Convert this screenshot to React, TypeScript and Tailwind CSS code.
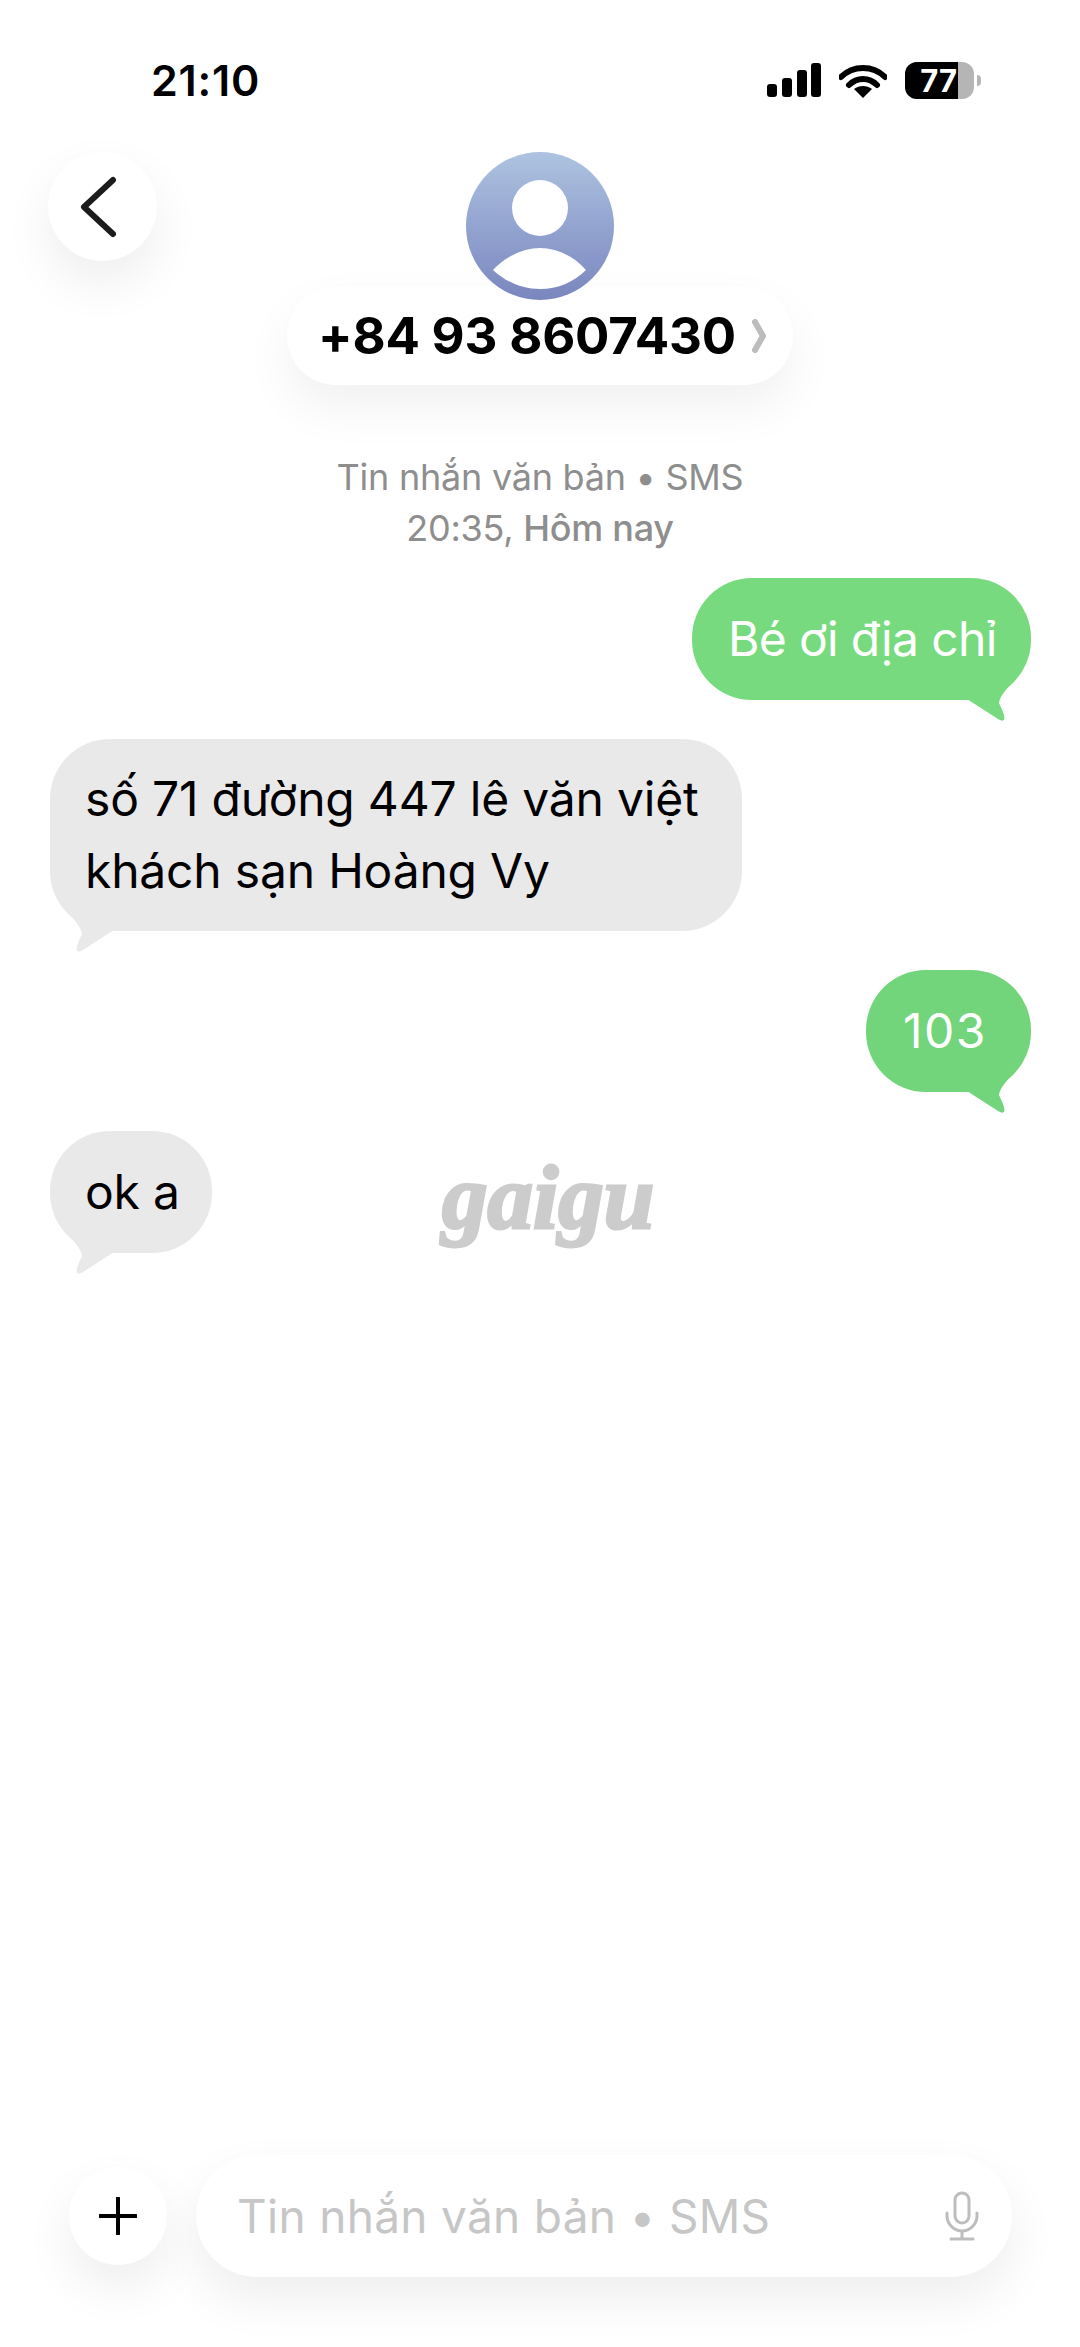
const sans = "font-['Inter','Noto_Sans',sans-serif]";

const Tail = ({ color, flip }: { color: string; flip?: boolean }) => (
  <svg
    viewBox="0 0 70 50"
    className={`absolute bottom-[-21px] w-[70px] h-[50px] ${flip ? "right-0 -scale-x-100" : "left-0"}`}
  >
    <path d="M64 28L33 48Q25 53 27 44Q29 38 32 32C31 25 24 17 17 10Z" fill={color} />
  </svg>
);

const Bubble = ({
  mine,
  tail,
  className,
  children,
}: {
  mine?: boolean;
  tail: string;
  className: string;
  children: React.ReactNode;
}) => (
  <div className={`flex ${mine ? "justify-end pr-[49px]" : "justify-start pl-[50px]"}`}>
    <div className={`relative rounded-[60px] text-[48px] leading-[72px] tracking-[-0.2px] ${className}`}>
      <Tail color={tail} flip={mine} />
      <span className="relative">{children}</span>
    </div>
  </div>
);

const StatusBar = () => (
  <div className="flex items-center justify-between h-[40px] mt-[60px] pl-[151px] pr-[99px]">
    <span className="text-[43px] font-semibold tracking-[0.8px] text-black">21:10</span>
    <div className="flex items-center">
      <svg viewBox="0 0 54 34" className="w-[54px] h-[34px]">
        <rect x="0" y="21" width="10" height="13" rx="3" />
        <rect x="15" y="15" width="10" height="19" rx="3" />
        <rect x="30" y="7" width="10" height="27" rx="3" />
        <rect x="44" y="0" width="10" height="34" rx="3" />
      </svg>
      <svg viewBox="0 0 48 35" className="w-[48px] h-[35px] ml-[18px]">
        <path d="M2 14C14 2 34 2 46 14" fill="none" stroke="#000" strokeWidth="6" strokeLinecap="round" />
        <path d="M10 22C18 14 30 14 38 22" fill="none" stroke="#000" strokeWidth="6" strokeLinecap="round" />
        <path d="M24 35L15 26C20 22 28 22 33 26Z" />
      </svg>
      <div className="flex items-center ml-[18px]">
        <div className="relative w-[69px] h-[37px] rounded-[12px] overflow-hidden bg-[#b5b5b5]">
          <div className="flex items-center justify-end w-[53px] h-full bg-black pr-[1px] text-[31px] font-bold leading-none text-white">
            77
          </div>
        </div>
        <div className="w-[4px] h-[11px] ml-[3px] rounded-r-full bg-[#b5b5b5]" />
      </div>
    </div>
  </div>
);

const Header = () => (
  <div className="grid grid-cols-[1fr_auto_1fr] mt-[52px] px-[48px]">
    <div>
      <button className="flex items-center justify-center w-[109px] h-[109px] pr-[9px] rounded-full bg-white shadow-[0_22px_50px_rgba(0,0,0,0.07)]">
        <svg viewBox="0 0 40 62" className="w-[40px] h-[62px]" fill="none" stroke="#1c1c1c" strokeWidth="6" strokeLinecap="round" strokeLinejoin="round">
          <path d="M35 4L6 31L35 58" />
        </svg>
      </button>
    </div>
    <div className="flex flex-col items-center">
      {/* avatar overlaps the top edge of the number pill */}
      <div className="relative z-10 w-[148px] h-[148px] rounded-full bg-gradient-to-b from-[#aec3e0] to-[#7a86bf]">
        <svg viewBox="0 0 148 148" className="w-full h-full" fill="#fff">
          <circle cx="74" cy="56" r="28" />
          <path d="M27 118C40 104 58 96 74 96C90 96 108 104 120 118C108 130 92 137 74 137C56 137 40 130 27 118Z" />
        </svg>
      </div>
      <div className="flex items-center h-[98px] -mt-[13px] pl-[31px] pr-[25px] rounded-full bg-white shadow-[0_22px_50px_rgba(0,0,0,0.06)]">
        <span className="text-[51px] font-bold tracking-[-0.2px] text-black">+84 93 8607430</span>
        <svg viewBox="0 0 18 36" className="w-[18px] h-[36px] ml-[14px]" fill="none" stroke="#bcbcbc" strokeWidth="6" strokeLinecap="round" strokeLinejoin="round">
          <path d="M5 4L13 18L5 32" />
        </svg>
      </div>
    </div>
    <div />
  </div>
);

const InputBar = () => (
  <div className="flex items-center pl-[69px] pr-[68px]">
    <button className="flex items-center justify-center w-[98px] h-[98px] rounded-full bg-white shadow-[0_22px_50px_rgba(0,0,0,0.07)]">
      <svg viewBox="0 0 38 38" className="w-[38px] h-[38px]" fill="none" stroke="#000" strokeWidth="4" strokeLinecap="round">
        <path d="M19 1V37M1 19H37" />
      </svg>
    </button>
    <div className="flex items-center justify-between flex-1 h-[122px] ml-[29px] pl-[41px] pr-[33px] rounded-[61px] bg-white shadow-[0_22px_50px_rgba(0,0,0,0.07)]">
      <span className="text-[46px] tracking-[0.3px] text-[#c6c6c6]">Tin nhắn văn bản • SMS</span>
      <svg viewBox="0 0 34 50" className="w-[34px] h-[50px]" fill="none" stroke="#bdbdbd" strokeWidth="3" strokeLinecap="round">
        <rect x="10" y="2" width="14" height="30" rx="7" />
        <path d="M2 22V25C2 33 9 40 17 40C25 40 32 33 32 25V22M17 40V48M6 48H28" />
      </svg>
    </div>
  </div>
);

export default function App() {
  return (
    <main className={`relative flex flex-col w-[1080px] h-[2347px] overflow-hidden bg-white ${sans}`}>
      <StatusBar />
      <Header />

      <div className="mt-[67px] text-center text-[36px] leading-[51px] tracking-[-0.25px] text-[#8e8e8e]">
        <p>Tin nhắn văn bản • SMS</p>
        <p>
          20:35, <span className="font-medium">Hôm nay</span>
        </p>
      </div>

      <div className="flex flex-col mt-[24px] gap-[39px]">
        <Bubble mine tail="#78da7e" className="w-[339px] pl-[36px] py-[25px] bg-[#78da7e] text-white">
          <span className="tracking-[-0.65px]">Bé ơi địa chỉ</span>
        </Bubble>
        <Bubble tail="#e9e9e9" className="w-[692px] pl-[35px] pr-[20px] py-[24px] bg-[#e9e9e9] text-black">
          số 71 đường 447 lê văn việt
          <br />
          khách sạn Hoàng Vy
        </Bubble>
        <Bubble mine tail="#72d47b" className="w-[165px] pl-[37px] py-[25px] bg-[#72d47b] text-white">
          <span className="tracking-[1.5px]">103</span>
        </Bubble>
        <Bubble tail="#e9e9e9" className="w-[162px] pl-[35px] py-[25px] bg-[#e9e9e9] text-black">
          ok a
        </Bubble>
      </div>

      {/* watermark sits on top of the thread */}
      <span className="absolute left-[442px] top-[1138px] text-[91px] leading-[120px] font-bold italic text-[#cccccc] [-webkit-text-stroke:3px_#cccccc] font-['Liberation_Serif',serif]">
        gaigu
      </span>

      <div className="mt-auto mb-[70px]">
        <InputBar />
      </div>
    </main>
  );
}
